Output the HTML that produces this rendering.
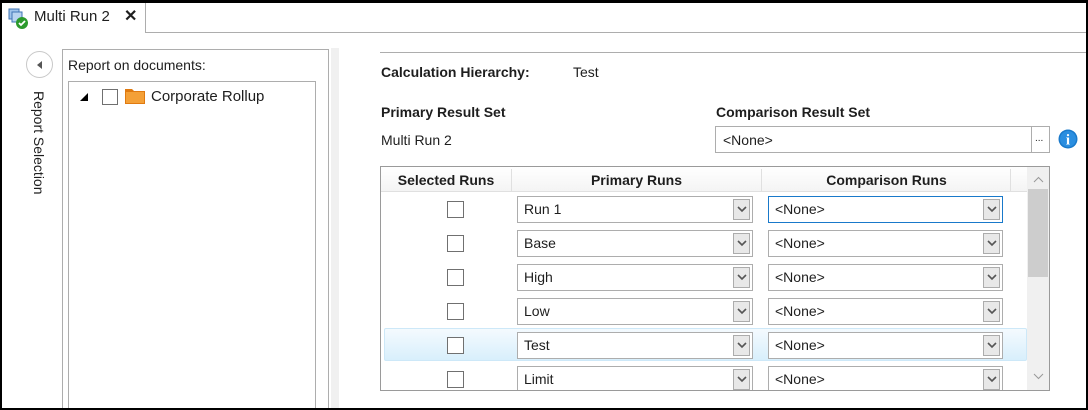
<!DOCTYPE html>
<html><head><meta charset="utf-8"><style>
*{box-sizing:border-box;margin:0;padding:0}
html,body{width:1088px;height:410px;overflow:hidden}
body{background:#fff;position:relative;font-family:"Segoe UI","Liberation Sans",sans-serif;font-size:14px;color:#1e1e1e}
.a{position:absolute}
.cb{position:absolute;width:17px;height:17px;border:1px solid #707070;background:#fff}
.combo{position:absolute;height:27px;border:1px solid #adadad;background:#fff;padding:4px 0 0 6px;font-size:14px}
.combo .btn{position:absolute;right:2px;top:2px;width:17px;height:21px;border:1px solid #acacac;background:#e8e8e8}
.combo .btn svg{position:absolute;left:3px;top:6px}
.b{font-weight:bold}
</style></head><body>
<!-- tab -->
<div class="a" style="left:2px;top:3px;width:144px;height:30px;background:#fff;border-right:1px solid #adadad;"></div>
<div class="a" style="left:146px;top:32px;width:940px;height:1px;background:#adadad"></div>
<svg class="a" style="left:8px;top:8px" width="22" height="22" viewBox="0 0 22 22"><rect x="1" y="1" width="10" height="10" fill="#9fc3ea" stroke="#3f74b5"/><rect x="4" y="4" width="10" height="10" fill="#b8d3f0" stroke="#3f74b5"/><circle cx="14" cy="15" r="6" fill="#2c9a2c"/><path d="M11 15l2 2 4-4" stroke="#fff" stroke-width="1.8" fill="none"/></svg>
<div class="a" style="left:34px;top:8px;font-size:15px">Multi Run 2</div>
<div class="a" style="left:124px;top:6px;font-size:16px;font-weight:bold">✕</div>
<!-- collapse button -->
<div class="a" style="left:26px;top:51px;width:27px;height:27px;border:1px solid #c8c8c8;border-radius:50%"></div>
<svg class="a" style="left:37px;top:61px" width="6" height="8"><path d="M5 0L0 4 5 8z" fill="#555"/></svg>
<div class="a" style="left:48px;top:91px;transform-origin:0 0;transform:rotate(90deg);white-space:nowrap;font-size:14px;line-height:19px">Report Selection</div>
<!-- left panel -->
<div class="a" style="left:62px;top:49px;width:267px;height:370px;border:1px solid #adadad"></div>
<div class="a" style="left:68px;top:57px">Report on documents:</div>
<div class="a" style="left:68px;top:81px;width:248px;height:340px;border:1px solid #adadad"></div>
<svg class="a" style="left:79px;top:92px" width="10" height="10"><path d="M9 1L9 9 1 9z" fill="#000"/></svg>
<div class="cb" style="left:102px;top:89px;width:16px;height:16px"></div>
<svg class="a" style="left:125px;top:87px" width="21" height="18"><path d="M0 2h7l2 2h11v13H0z" fill="#e07a10"/><rect x="1" y="5" width="18" height="11" fill="#f4a037"/></svg>
<div class="a" style="left:151px;top:88px;font-size:15px">Corporate Rollup</div>
<div class="a" style="left:331px;top:48px;width:8px;height:362px;background:#f0f0f0"></div>
<!-- right -->
<div class="a" style="left:380px;top:52px;width:706px;height:1px;background:#adadad"></div>
<div class="a b" style="left:381px;top:64px">Calculation Hierarchy:</div>
<div class="a" style="left:573px;top:64px">Test</div>
<div class="a b" style="left:381px;top:104px">Primary Result Set</div>
<div class="a b" style="left:716px;top:104px">Comparison Result Set</div>
<div class="a" style="left:381px;top:132px">Multi Run 2</div>
<div class="a" style="left:715px;top:126px;width:335px;height:27px;border:1px solid #adadad"></div>
<div class="a" style="left:1031px;top:127px;width:1px;height:25px;background:#adadad"></div>
<div class="a" style="left:723px;top:132px">&lt;None&gt;</div>
<div class="a" style="left:1035px;top:133px;font-size:10px">...</div>
<svg class="a" style="left:1058px;top:129px" width="20" height="20"><circle cx="10" cy="10" r="9.5" fill="#1a7acb"/><circle cx="10" cy="10" r="8" fill="#2a8ee0"/><text x="10" y="15.5" text-anchor="middle" fill="#fff" font-family="Liberation Serif" font-weight="bold" font-size="15">i</text></svg>
<!-- grid -->
<div class="a" style="left:380px;top:166px;width:670px;height:225px;border:1px solid #9a9a9a;overflow:hidden">
 <div class="a" style="left:0;top:0;width:646px;height:25px;background:linear-gradient(#fff,#f4f4f4);border-bottom:1px solid #e0e0e0"></div>
 <div class="a" style="left:130px;top:2px;width:1px;height:22px;background:#e0e0e0"></div>
 <div class="a" style="left:380px;top:2px;width:1px;height:22px;background:#e0e0e0"></div>
 <div class="a" style="left:629px;top:2px;width:1px;height:22px;background:#e0e0e0"></div>
 <div class="a b" style="left:0;width:130px;top:5px;text-align:center">Selected Runs</div>
 <div class="a b" style="left:131px;width:249px;top:5px;text-align:center">Primary Runs</div>
 <div class="a b" style="left:381px;width:249px;top:5px;text-align:center">Comparison Runs</div>
 <div class="a" style="left:646px;top:0;width:22px;height:223px;background:#f0f0f0"></div>
 <div class="a" style="left:647px;top:22px;width:20px;height:88px;background:#cdcdcd"></div>
 <svg class="a" style="left:652px;top:9px" width="11" height="7"><path d="M1 6l4.5-4.5L10 6" stroke="#999" fill="none"/></svg>
 <svg class="a" style="left:652px;top:206px" width="11" height="7"><path d="M1 1l4.5 4.5L10 1" stroke="#999" fill="none"/></svg>
 <div class="a" style="left:3px;top:161px;width:643px;height:33px;border:1px solid #cde8f8;border-radius:2px;background:linear-gradient(#f4fafe,#d8effc)"></div>
</div>
<div id="rows"></div>
<script>
var n=["Run 1","Base","High","Low","Test","Limit"],h="";
n.forEach(function(t,i){var y=196+i*34;
var arrow='<div class="btn"><svg width="10" height="7"><path d="M1 1l4 4 4-4" stroke="#555" stroke-width="1.6" fill="none"/></svg></div>';
h+='<div class="cb" style="left:447px;top:'+(y+5)+'px;width:17px;height:17px"></div>';
h+='<div class="combo" style="left:517px;top:'+y+'px;width:236px">'+t+arrow+'</div>';
h+='<div class="combo" style="left:768px;top:'+y+'px;width:235px;'+(i==0?'border-color:#1979ca':'')+'">&lt;None&gt;'+arrow+'</div>';});
document.getElementById('rows').innerHTML=h;
</script>
<div class="a" style="left:381px;top:390px;width:669px;height:18px;background:#fff;border-top:1px solid #9a9a9a"></div>
<div class="a" style="left:0;top:0;width:1088px;height:410px;border:2px solid #000;border-top-width:3px"></div>
</body></html>
